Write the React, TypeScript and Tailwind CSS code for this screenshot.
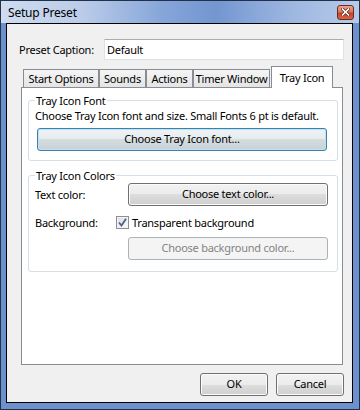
import React from "react";

const btnGray =
  "bg-[linear-gradient(#f2f2f2_0%,#ebebeb_50%,#dddddd_50%,#cfcfcf_100%)] border border-[#707070] rounded-[3px] shadow-[inset_0_0_0_1px_#fbfbfb] flex items-center justify-center text-black whitespace-nowrap";

function Tab({ label, w }: { label: string; w: string }) {
  return (
    <div
      className={`${w} h-[18px] border border-b-0 border-[#898c95] bg-[linear-gradient(#f5f5f5,#e4e4e4)] flex items-center justify-center leading-none whitespace-nowrap`}
    >
      {label}
    </div>
  );
}

export default function App() {
  return (
    <div
      className="w-[360px] h-[410px] border border-[#22314a] bg-[#6d91cd] flex flex-col text-[11px] tracking-[-0.25px] text-black whitespace-nowrap"
      style={{ fontFamily: '"Noto Sans", sans-serif' }}
    >
      {/* title bar */}
      <div className="h-[22px] shrink-0 flex items-center justify-between pl-[7px] pr-[5px] bg-[linear-gradient(90deg,#cfdcf0_0%,#bccde9_22%,#86a6d9_45%,#7396d1_60%,#9fb8e1_82%,#b7cae8_100%)]">
        <span className="text-[12px] tracking-[-0.2px] leading-none pt-[1px]">Setup Preset</span>
        <div className="w-[17px] h-[15px] rounded-[3px] border border-[#6e2a1c] bg-[linear-gradient(#e9a591_0%,#d9775e_45%,#c4422a_55%,#d5674a_100%)] flex items-center justify-center">
          <svg width="9" height="8" viewBox="0 0 9 8">
            <path d="M1.5 1 L7.5 7 M7.5 1 L1.5 7" stroke="#5a2418" strokeWidth="3" strokeLinecap="square" />
            <path d="M1.5 1 L7.5 7 M7.5 1 L1.5 7" stroke="#ffffff" strokeWidth="1.6" strokeLinecap="square" />
          </svg>
        </div>
      </div>

      {/* client */}
      <div className="flex-1 ml-[5px] mr-[6px] mb-[6px] border border-black bg-[#f0f0f0] flex flex-col">
        {/* caption row */}
        <div className="mt-[15px] h-[21px] flex items-center pl-[12px] pr-[8px]">
          <span className="leading-none">Preset Caption:</span>
          <div className="ml-auto w-[240px] h-[21px] border border-[#dde2e8] border-t-[#abadb3] bg-white flex items-center pl-[2px] leading-none">
            Default
          </div>
        </div>

        {/* tabs */}
        <div className="mt-[6px] ml-[16px] flex items-end h-[21px]">
          <Tab label="Start Options" w="w-[76px]" />
          <Tab label="Sounds" w="w-[47px]" />
          <Tab label="Actions" w="w-[47px]" />
          <Tab label="Timer Window" w="w-[77px]" />
          <div className="relative z-10 ml-[1px] w-[62px] h-[22px] -mb-[1px] border border-b-0 border-[#898c95] bg-white flex items-center justify-center pb-[1px] leading-none">
            Tray Icon
          </div>
        </div>

        {/* panel */}
        <div className="ml-[14px] w-[322px] h-[278px] border border-[#898c95] bg-white flex flex-col pl-[6px]">
          <fieldset className="mt-[5px] w-[310px] border border-[#d5dfe5] rounded-[3px] pl-[6px] pr-[9px] pb-[9px]">
            <legend className="px-[1px] leading-[15px]">Tray Icon Font</legend>
            <div className="leading-[15px]">
              Choose Tray Icon font and size. Small Fonts 6 pt is default.
            </div>
            <div className="mt-[5px] ml-[2px] w-[290px] h-[23px] rounded-[3px] border border-[#3c7fb1] bg-[linear-gradient(#eef3f6_0%,#e6ebee_50%,#d6dde1_50%,#c9d1d6_100%)] shadow-[inset_0_0_0_1px_#bde3f7] flex items-center justify-center">
              Choose Tray Icon font...
            </div>
          </fieldset>

          <fieldset className="mt-[7px] w-[310px] border border-[#d5dfe5] rounded-[3px] pl-[6px] pr-[9px] pb-[11px]">
            <legend className="px-[1px] leading-[15px]">Tray Icon Colors</legend>
            <div className="flex items-center h-[23px]">
              <span className="leading-none">Text color:</span>
              <div className={`ml-auto w-[200px] h-[23px] ${btnGray}`}>Choose text color...</div>
            </div>
            <div className="mt-[9px] h-[15px] flex items-center">
              <span className="w-[81px] leading-none">Background:</span>
              <div className="w-[13px] h-[13px] border border-[#8f8f8f] bg-[linear-gradient(135deg,#dcdcdc,#fbfbfb)] shadow-[inset_0_0_0_1px_#f4f4f4] flex items-center justify-center">
                <svg width="9" height="9" viewBox="0 0 9 9">
                  <path d="M1 4.5 L3.5 7.5 L8 0.8" fill="none" stroke="#4a5f97" strokeWidth="1.8" />
                </svg>
              </div>
              <span className="ml-[3px] leading-none">Transparent background</span>
            </div>
            <div className="mt-[7px] flex">
              <div className="ml-auto w-[200px] h-[23px] rounded-[3px] border border-[#adb2b5] bg-[#f4f4f4] text-[#838383] flex items-center justify-center">
                Choose background color...
              </div>
            </div>
          </fieldset>
        </div>

        {/* bottom buttons */}
        <div className="mt-[8px] flex justify-end gap-[8px] pr-[8px]">
          <div className={`w-[68px] h-[23px] ${btnGray}`}>OK</div>
          <div className={`w-[68px] h-[23px] ${btnGray}`}>Cancel</div>
        </div>
      </div>
    </div>
  );
}
